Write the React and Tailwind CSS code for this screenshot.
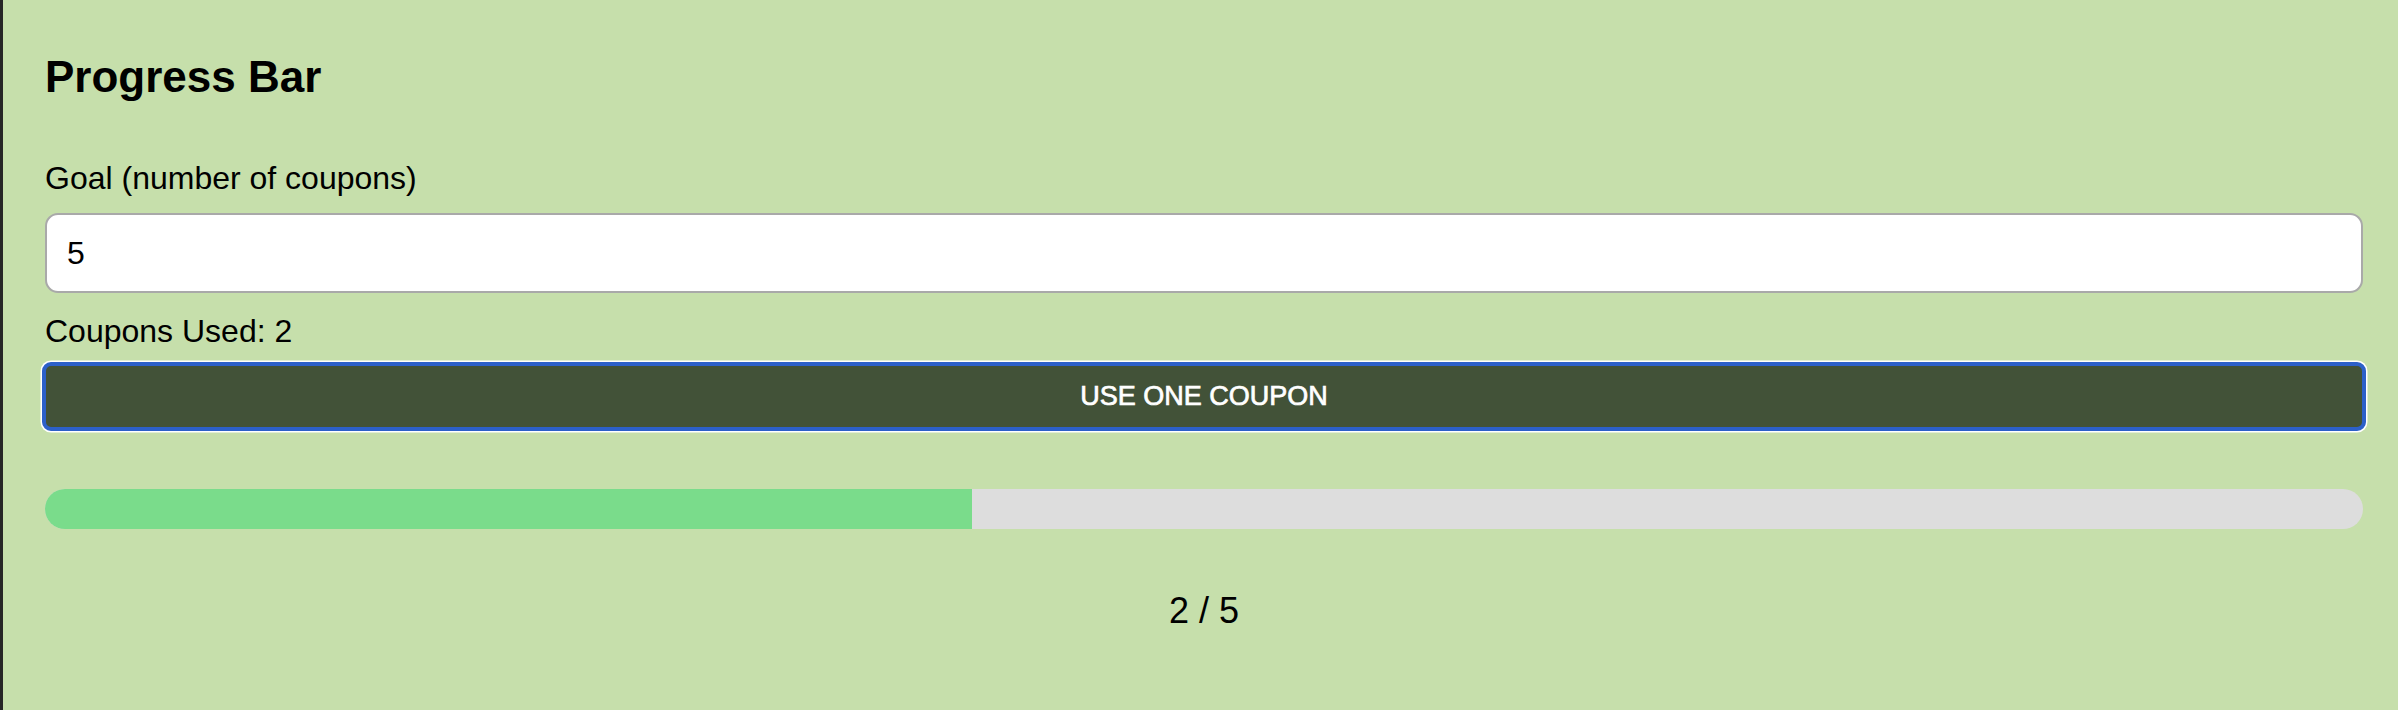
import { useState } from 'react';

export default function App() {
  const [goal, setGoal] = useState('5');
  const [used, setUsed] = useState(2);

  const total = Number(goal) || 0;
  const pct = total > 0 ? Math.min(100, (used / total) * 100) : 0;

  return (
    <div className="min-h-screen bg-[#c6dfab] border-l-[3px] border-[#262626] pl-[42px] pr-[35px] pt-[55px] text-black font-['Liberation_Sans',Arial,sans-serif]">
      <div className="flex flex-col">
        <h2 className="text-[44px] leading-[44px] font-bold">Progress Bar</h2>

        <label htmlFor="goal" className="mt-[61px] text-[32px] leading-[36px]">Goal (number of coupons)</label>
        <input
          id="goal"
          type="number"
          value={goal}
          onChange={e => setGoal(e.target.value)}
          className="mt-[17px] h-[80px] w-full rounded-[13px] border-2 border-[#a9a9a9] bg-white px-[20px] text-[32px] outline-none [appearance:textfield]"
        />

        <p className="mt-[20px] text-[32px] leading-[36px]">Coupons Used: {used}</p>

        <button
          type="button"
          onClick={() => setUsed(u => u + 1)}
          className="mt-[13px] -mx-[3px] h-[69px] rounded-[9px] border-4 border-[#2c60c9] bg-[#425238] text-[27px] uppercase text-white [-webkit-text-stroke:0.7px_#ffffff] shadow-[0_0_0_1.5px_#ffffff]"
        >
          Use one coupon
        </button>

        <div className="mt-[58px] h-[40px] w-full overflow-hidden rounded-full bg-[#dddddd]">
          <div className="h-full bg-[#7adc8b]" style={{ width: `${pct}%` }} />
        </div>

        <p className="mt-[62px] text-center text-[36px] leading-[40px]">{used} / {total}</p>
      </div>
    </div>
  );
}
